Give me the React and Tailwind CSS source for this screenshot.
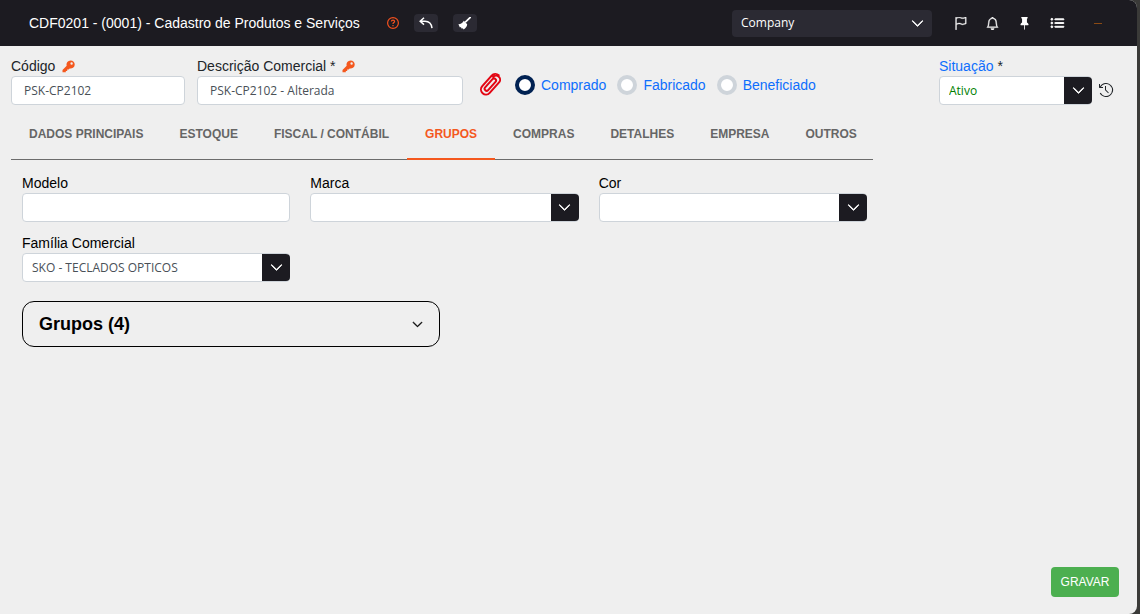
import { useState } from "react";
import { BsFlag, BsBell, BsPinFill, BsListUl, BsChevronDown } from "react-icons/bs";
import { VscHistory } from "react-icons/vsc";

const tabs = [
  "DADOS PRINCIPAIS",
  "ESTOQUE",
  "FISCAL / CONTÁBIL",
  "GRUPOS",
  "COMPRAS",
  "DETALHES",
  "EMPRESA",
  "OUTROS",
];

const origens = ["Comprado", "Fabricado", "Beneficiado"];

function KeyIcon() {
  return (
    <svg width="13" height="13" viewBox="0 0 13 13" className="ml-[3px] text-[#f4581e]" fill="currentColor">
      <path
        fillRule="evenodd"
        d="M8.600.4a4.100 4.100 0 1 1-.9 8.100L6.600 9.600H5.200v1.400H3.800v1.300H.5V9.900l4.200-4.200A4.100 4.100 0 0 1 8.600.4ZM9.600 2.300a1.200 1.200 0 1 0 0 2.400 1.200 1.200 0 0 0 0-2.400Z"
      />
    </svg>
  );
}

function BroomIcon() {
  return (
    <svg width="13" height="13" viewBox="0 0 13 13" fill="currentColor">
      <path d="M12.300.3 7.600 4.900" stroke="currentColor" strokeWidth="1.700" strokeLinecap="round" />
      <path d="M5.800 3.700 9.200 7.200C9 9.500 7.600 11.300 5.600 12.500L4.700 11l-.7.900L2.800 10l-.9.500L.4 7.300C2.900 7.200 4.600 5.800 5.800 3.700Z" />
    </svg>
  );
}

function PaperclipIcon() {
  return (
    <svg width="22" height="24" viewBox="0 0 22 24" fill="none" stroke="currentColor" strokeWidth="2" strokeLinecap="round">
      <path
        transform="rotate(42 11 12)"
        d="M6 7v11a5 5 0 0 0 10 0V4a4 4 0 0 0-8 0M9 8v9a2 2 0 0 0 4 0V6a2 2 0 0 0-4 0v2M6 7V4a5 5 0 0 1 5-5"
      />
    </svg>
  );
}

function Label({ htmlFor, children, className = "text-black" }) {
  return (
    <label htmlFor={htmlFor} className={`flex h-5 items-center gap-1 text-sm ${className}`}>
      {children}
    </label>
  );
}

function TextField({ id, defaultValue }) {
  return (
    <input
      id={id}
      type="text"
      defaultValue={defaultValue}
      className="h-[29px] w-full rounded-sm border border-[#ced4da] bg-white px-3 font-['Open_Sans',sans-serif] text-xs text-[#495057]"
    />
  );
}

function SelectField({ id, options, className = "text-[#495057]" }) {
  return (
    <div className="relative">
      <select
        id={id}
        className={`h-[29px] w-full appearance-none rounded-sm border border-[#ced4da] bg-white pr-8 pl-[9px] font-['Open_Sans',sans-serif] text-xs ${className}`}
      >
        {options.map((option) => (
          <option key={option}>{option}</option>
        ))}
      </select>
      <span className="pointer-events-none absolute inset-y-px right-0 flex w-7 items-center justify-center rounded-r-sm bg-[#1c1b21] text-white">
        <BsChevronDown size={13} strokeWidth={1} />
      </span>
    </div>
  );
}

function Header() {
  return (
    <header className="flex h-[46px] items-center rounded-tr-lg bg-[#1c1b21] pr-[35px] pl-[29px] text-white">
      <h1 className="text-sm">CDF0201 - (0001) - Cadastro de Produtos e Serviços</h1>
      <button aria-label="Ajuda" className="ml-[27px] text-[#f4511e]">
        <svg width="12" height="12" viewBox="0 0 12 12" fill="none" stroke="currentColor" strokeWidth="1.2">
          <circle cx="6" cy="6" r="5.4" />
          <path d="M4.400 4.600c0-2.100 3.200-2.100 3.200 0 0 1-1.600 1-1.600 2.300M6 8v1.200" />
        </svg>
      </button>
      <button
        aria-label="Desfazer"
        className="ml-[15px] flex h-[18px] w-6 items-center justify-center rounded-sm bg-[#2b2a33]"
      >
        <svg width="14" height="12" viewBox="0 0 14 12" fill="none" stroke="currentColor" strokeWidth="1.5">
          <path d="M5 .8 1.200 4.200 5 7.600M1.400 4.200H6c4.500 0 6.500 2.500 7 7" />
        </svg>
      </button>
      <button
        aria-label="Limpar"
        className="ml-[15px] flex h-[18px] w-6 items-center justify-center rounded-sm bg-[#2b2a33]"
      >
        <BroomIcon />
      </button>

      <div className="relative ml-auto w-[200px]">
        <select
          aria-label="Empresa"
          className="h-[27px] w-full appearance-none rounded-sm bg-[#2b2a33] px-[9px] font-['Open_Sans',sans-serif] text-xs text-white"
        >
          <option>Company</option>
        </select>
        <BsChevronDown
          size={13}
          strokeWidth={1}
          className="pointer-events-none absolute top-[7px] right-2"
        />
      </div>
      <nav className="ml-[22px] flex items-center gap-[19px]">
        <button aria-label="Marcadores">
          <BsFlag size={13} strokeWidth={0.5} />
        </button>
        <button aria-label="Notificações">
          <BsBell size={13} strokeWidth={0.5} />
        </button>
        <button aria-label="Fixar">
          <BsPinFill size={13} />
        </button>
        <button aria-label="Menu">
          <BsListUl size={15} strokeWidth={1} />
        </button>
      </nav>
      <span className="ml-[29px] h-px w-2 bg-[#8a4a14]" />
    </header>
  );
}

function App() {
  const [activeTab, setActiveTab] = useState("GRUPOS");
  const [origem, setOrigem] = useState("Comprado");

  return (
    <div className="min-h-screen bg-[#3a3a38] pr-[3px] font-['Liberation_Sans',sans-serif]">
      <div className="flex min-h-screen flex-col rounded-r-lg bg-[#efefef]">
        <Header />

        <main className="flex flex-1 flex-col pt-[10px] pr-[18px] pb-[17px] pl-[11px]">
          <div className="flex items-start pr-[5px]">
            <div className="w-[174px]">
              <Label htmlFor="codigo" className="text-[#212529]">
                Código <KeyIcon />
              </Label>
              <TextField id="codigo" defaultValue="PSK-CP2102" />
            </div>
            <div className="ml-3 w-[266px]">
              <Label htmlFor="descricao" className="text-[#212529]">
                Descrição Comercial * <KeyIcon />
              </Label>
              <TextField id="descricao" defaultValue="PSK-CP2102 - Alterada" />
            </div>
            <button aria-label="Anexos" className="mt-[17px] ml-4 text-[#e30613]">
              <PaperclipIcon />
            </button>
            <fieldset className="mt-[19px] ml-[14px] flex gap-[11px]">
              {origens.map((item) => (
                <label key={item} className="flex items-center gap-[6px] text-sm text-[#0d6efd]">
                  <input
                    type="radio"
                    name="origem"
                    checked={origem === item}
                    onChange={() => setOrigem(item)}
                    className="size-5 appearance-none rounded-full border-4 border-[#ced4da] bg-white checked:border-[#002152]"
                  />
                  {item}
                </label>
              ))}
            </fieldset>
            <div className="ml-auto w-[153px]">
              <Label htmlFor="situacao" className="text-[#0d6efd]">
                Situação <span className="text-[#212529]">*</span>
              </Label>
              <SelectField id="situacao" options={["Ativo"]} className="text-[#008000]" />
            </div>
            <button aria-label="Histórico" className="mt-[26px] ml-[6px] text-[#212529]">
              <VscHistory size={16} />
            </button>
          </div>

          <div role="tablist" className="flex h-[55px] w-[862px] border-b border-[#6c6c6c]">
            {tabs.map((tab) => (
              <button
                key={tab}
                role="tab"
                aria-selected={activeTab === tab}
                onClick={() => setActiveTab(tab)}
                className={`-mb-px border-b-2 px-[18px] pt-1 text-xs font-bold whitespace-nowrap ${
                  activeTab === tab
                    ? "border-[#f4581e] text-[#f4581e]"
                    : "border-transparent text-[#666666]"
                }`}
              >
                {tab}
              </button>
            ))}
          </div>

          <section className="px-[11px] pt-[13px]">
            <div className="grid w-[845px] grid-cols-3 gap-x-5 gap-y-[11px]">
              <div>
                <Label htmlFor="modelo">Modelo</Label>
                <TextField id="modelo" />
              </div>
              <div>
                <Label htmlFor="marca">Marca</Label>
                <SelectField id="marca" options={[""]} />
              </div>
              <div>
                <Label htmlFor="cor">Cor</Label>
                <SelectField id="cor" options={[""]} />
              </div>
              <div>
                <Label htmlFor="familia">Família Comercial</Label>
                <SelectField id="familia" options={["SKO - TECLADOS OPTICOS"]} />
              </div>
            </div>
            <button className="mt-[19px] flex h-[46px] w-[418px] items-center justify-between rounded-xl border border-black px-4 text-lg font-bold text-black">
              Grupos (4)
              <BsChevronDown size={11} strokeWidth={1} />
            </button>
          </section>

          <button className="mt-auto h-[30px] w-[68px] self-end rounded-sm bg-[#4caf50] text-xs text-white">
            GRAVAR
          </button>
        </main>
      </div>
    </div>
  );
}

export default App;
